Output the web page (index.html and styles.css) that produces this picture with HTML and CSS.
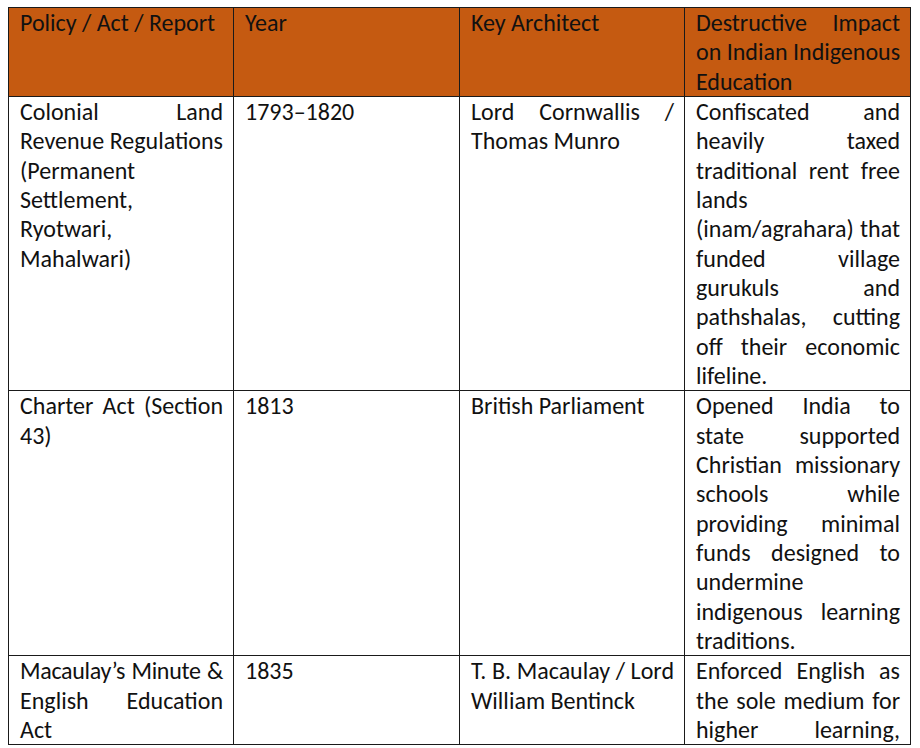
FILE: index.html
```html
<!DOCTYPE html>
<html lang="en">
<head>
<meta charset="utf-8">
<title>Colonial Education Policies</title>
<link rel="stylesheet" href="styles.css">
</head>
<body>
<table class="policy">
  <colgroup>
    <col class="c1"><col class="c2"><col class="c3"><col class="c4">
  </colgroup>
  <thead>
    <tr>
      <th><span class="ln">Policy / Act / Report</span></th>
      <th><span class="ln">Year</span></th>
      <th><span class="ln">Key Architect</span></th>
      <th><span class="ln">Destructive Impact</span><span class="ln">on Indian Indigenous</span><span class="ln">Education</span></th>
    </tr>
  </thead>
  <tbody>
    <tr>
      <td><span class="ln">Colonial Land</span><span class="ln">Revenue Regulations</span><span class="ln">(Permanent</span><span class="ln">Settlement,</span><span class="ln">Ryotwari,</span><span class="ln">Mahalwari)</span></td>
      <td><span class="ln">1793–1820</span></td>
      <td><span class="ln">Lord Cornwallis /</span><span class="ln">Thomas Munro</span></td>
      <td><span class="ln">Confiscated and</span><span class="ln">heavily taxed</span><span class="ln">traditional rent free</span><span class="ln">lands</span><span class="ln">(inam/agrahara) that</span><span class="ln">funded village</span><span class="ln">gurukuls and</span><span class="ln">pathshalas, cutting</span><span class="ln">off their economic</span><span class="ln">lifeline.</span></td>
    </tr>
    <tr>
      <td><span class="ln">Charter Act (Section</span><span class="ln">43)</span></td>
      <td><span class="ln">1813</span></td>
      <td><span class="ln">British Parliament</span></td>
      <td><span class="ln">Opened India to</span><span class="ln">state supported</span><span class="ln">Christian missionary</span><span class="ln">schools while</span><span class="ln">providing minimal</span><span class="ln">funds designed to</span><span class="ln">undermine</span><span class="ln">indigenous learning</span><span class="ln">traditions.</span></td>
    </tr>
    <tr class="cut">
      <td><span class="ln tight">Macaulay’s Minute &amp;</span><span class="ln">English Education</span><span class="ln">Act</span></td>
      <td><span class="ln">1835</span></td>
      <td><span class="ln">T. B. Macaulay / Lord</span><span class="ln">William Bentinck</span></td>
      <td><span class="ln">Enforced English as</span><span class="ln">the sole medium for</span><span class="ln">higher learning,</span></td>
    </tr>
  </tbody>
</table>
</body>
</html>
```
FILE: styles.css
```css
html, body {
  background: #ffffff;
}
body {
  margin: 7px 0 0 8px;
  font-family: Carlito, Calibri, "Open Sans", "Liberation Sans", sans-serif;
  font-size: 24px;
  line-height: 29.33px;
  color: #111111;
}
.policy {
  border-collapse: collapse;
  table-layout: fixed;
  width: 902px;
}
.c1 { width: 225px; }
.c2 { width: 226px; }
.c3 { width: 225px; }
.c4 { width: 226px; }
.policy th,
.policy td {
  border: 1px solid #1a1a1a;
  padding: 0 10px 0 11px;
  vertical-align: top;
  text-align: left;
  font-weight: normal;
  overflow: hidden;
}
.policy th {
  background: #c55a11;
  color: #111111;
  height: 88px;
}
.ln {
  display: block;
  white-space: nowrap;
  text-align: justify;
  text-align-last: justify;
}
.ln:last-child {
  text-align-last: left;
}
.ln.tight {
  letter-spacing: -0.3px;
}
.cut td:last-child .ln:last-child {
  text-align-last: justify;
}
```
